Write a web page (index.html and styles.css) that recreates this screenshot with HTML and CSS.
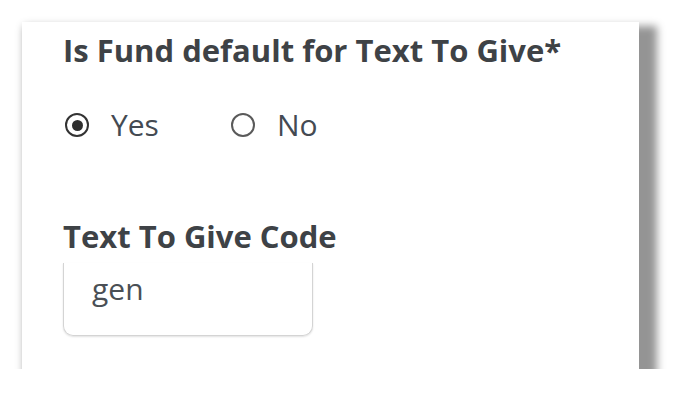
FILE: index.html
```html
<!DOCTYPE html>
<html>
<head>
<meta charset="utf-8">
<link rel="stylesheet" href="styles.css">
</head>
<body>
<div class="page">
  <div class="card">
    <h2 class="heading">Is Fund default for Text To Give*</h2>
    <div class="radios">
      <label class="radio"><span class="dot checked"></span><span class="rtext">Yes</span></label>
      <label class="radio"><span class="dot"></span><span class="rtext">No</span></label>
    </div>
    <div class="label">Text To Give Code</div>
    <div class="input"><span class="value">gen</span></div>
  </div>
</div>
</body>
</html>
```
FILE: styles.css
```css
html, body {
  margin: 0;
  padding: 0;
  background: #ffffff;
}
.page {
  padding: 22px 0 0 22px;
}
.card {
  box-sizing: border-box;
  width: 617px;
  height: 347px;
  background: #ffffff;
  box-shadow: 10px 12px 8px 8px rgba(0, 0, 0, 0.42);
  padding: 10px 0 0 41px;
}
.heading {
  margin: 0;
  font-family: "Open Sans", sans-serif;
  font-weight: 700;
  font-size: 31px;
  line-height: 36px;
  color: #3e4246;
}
.radios {
  display: flex;
  gap: 70px;
  margin-top: 39px;
}
.radio {
  display: flex;
  align-items: center;
  gap: 22px;
}
.dot {
  box-sizing: border-box;
  width: 24px;
  height: 24px;
  border-radius: 50%;
  border: 2px solid #5a5a5a;
  display: flex;
  align-items: center;
  justify-content: center;
  margin-left: 2px;
}
.dot.checked {
  border: 2.5px solid #333;
}
.dot.checked::after {
  content: "";
  width: 11px;
  height: 11px;
  border-radius: 50%;
  background: #2e2e2e;
}
.rtext {
  font-family: "Open Sans", sans-serif;
  font-size: 30px;
  line-height: 36px;
  color: #444a52;
}
.label {
  margin-top: 75px;
  font-family: "Open Sans", sans-serif;
  font-weight: 700;
  font-size: 31px;
  line-height: 36px;
  color: #3e4246;
}
.input {
  box-sizing: border-box;
  width: 250px;
  height: 73px;
  margin-top: 9px;
  border: 1px solid #d4d4d4;
  border-top: none;
  border-radius: 0 0 10px 10px;
  box-shadow: 0 1px 2px rgba(0, 0, 0, 0.12);
  padding: 6px 0 0 28px;
}
.value {
  font-family: "Open Sans", sans-serif;
  font-size: 30px;
  line-height: 40px;
  color: #4a4f55;
}
```
